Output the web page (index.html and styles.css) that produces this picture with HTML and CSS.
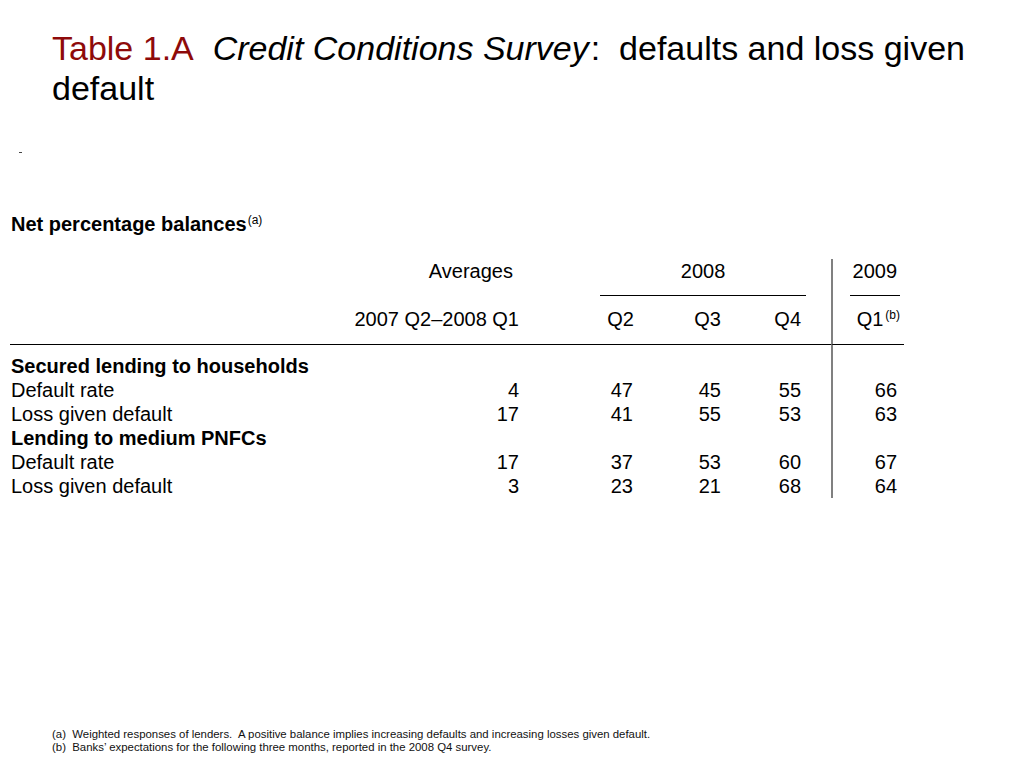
FILE: index.html
```html
<!DOCTYPE html>
<html>
<head>
<meta charset="utf-8">
<link rel="stylesheet" href="styles.css">
</head>
<body>
<div class="page">
  <h1 class="title"><span class="tnum">Table 1.A</span>&nbsp; <em>Credit Conditions Survey</em>:&nbsp; <span>defaults and loss given</span><br><span>default</span></h1>
  <div class="mark"></div>
  <div class="subhead">Net percentage balances<sup>(a)</sup></div>
  <table class="data">
    <colgroup>
      <col class="c-label"><col class="c-avg"><col class="c-q2"><col class="c-q3"><col class="c-q4"><col class="c-gap"><col class="c-q1"><col class="c-end">
    </colgroup>
    <tr class="h1">
      <td></td>
      <td class="num avg-h">Averages</td>
      <td colspan="3"><div class="u2008">2008</div></td>
      <td></td>
      <td class="num div"><div class="u2009">2009</div></td>
      <td></td>
    </tr>
    <tr class="h2">
      <td></td>
      <td class="num">2007 Q2–2008 Q1</td>
      <td class="num">Q2</td>
      <td class="num">Q3</td>
      <td class="num">Q4</td>
      <td></td>
      <td class="num div"><span class="q1b">Q1<sup>(b)</sup></span></td>
      <td></td>
    </tr>
    <tr class="first">
      <td class="grp" colspan="2">Secured lending to households</td>
      <td></td><td></td><td></td><td></td><td class="div"></td><td></td>
    </tr>
    <tr>
      <td class="lbl">Default rate</td><td class="num">4</td><td class="num q2">47</td><td class="num">45</td><td class="num">55</td><td></td><td class="num div">66</td><td></td>
    </tr>
    <tr>
      <td class="lbl">Loss given default</td><td class="num">17</td><td class="num q2">41</td><td class="num">55</td><td class="num">53</td><td></td><td class="num div">63</td><td></td>
    </tr>
    <tr>
      <td class="grp" colspan="2">Lending to medium PNFCs</td>
      <td></td><td></td><td></td><td></td><td class="div"></td><td></td>
    </tr>
    <tr>
      <td class="lbl">Default rate</td><td class="num">17</td><td class="num q2">37</td><td class="num">53</td><td class="num">60</td><td></td><td class="num div">67</td><td></td>
    </tr>
    <tr>
      <td class="lbl">Loss given default</td><td class="num">3</td><td class="num q2">23</td><td class="num">21</td><td class="num">68</td><td></td><td class="num div">64</td><td></td>
    </tr>
  </table>
  <div class="notes">
    <div>(a)&nbsp; Weighted responses of lenders.&nbsp; A positive balance implies increasing defaults and increasing losses given default.</div>
    <div>(b)&nbsp; Banks’ expectations for the following three months, reported in the 2008 Q4 survey.</div>
  </div>
</div>
</body>
</html>
```

FILE: styles.css
```css
html, body {
  margin: 0;
  padding: 0;
  background: #ffffff;
}
body {
  font-family: "Liberation Sans", Arial, sans-serif;
  color: #000;
}
.page {
  width: 1024px;
  height: 768px;
  display: flex;
  flex-direction: column;
  box-sizing: border-box;
}
.title {
  margin: 0;
  padding: 28px 40px 0 52px;
  font-size: 34px;
  line-height: 40px;
  font-weight: normal;
}
.title .tnum {
  color: #8e0a0a;
}
.title em {
  font-style: italic;
  padding-right: 2px;
}
.mark {
  margin: 44px 0 0 19px;
  width: 3px;
  height: 1px;
  background: #444;
}
.subhead {
  margin: 59px 0 0 11px;
  font-size: 20px;
  line-height: 24px;
  font-weight: bold;
}
.subhead sup {
  font-size: 12px;
  font-weight: normal;
  vertical-align: 7px;
  line-height: 0;
  margin-left: 1px;
}
.data {
  margin: 23px 0 0 10px;
  width: 894px;
  table-layout: fixed;
  border-collapse: separate;
  border-spacing: 0;
  font-size: 20px;
  line-height: 24px;
}
.data td {
  padding: 0;
  vertical-align: top;
  white-space: nowrap;
}
.c-label { width: 320px; }
.c-avg { width: 189px; }
.c-q2 { width: 115px; }
.c-q3 { width: 87px; }
.c-q4 { width: 80px; }
.c-gap { width: 30px; }
.c-q1 { width: 66px; }
.c-end { width: 7px; }

.num { text-align: right; }
.div { border-left: 2px solid #808080; }
.data tr.h1 td { height: 37px; }
.data tr.h1 td.div { box-shadow: inset 0 3px 0 #fff; }
.avg-h { padding-right: 6px !important; }
.u2008 {
  margin: 0 -5px 0 81px;
  text-align: center;
  padding-bottom: 12px;
  border-bottom: 1px solid #000;
}
.u2009 {
  margin: 0 -3px 0 17px;
  padding: 0 3px 12px 0;
  border-bottom: 1px solid #000;
  text-align: right;
}
.data tr.h2 td {
  padding-top: 11px;
  padding-bottom: 13px;
  border-bottom: 1px solid #000;
}
.q1b {
  margin-right: -3px;
}
.data sup {
  font-size: 12px;
  vertical-align: 7px;
  line-height: 0;
  margin-left: 2px;
}
.data tr.first td {
  padding-top: 9px;
}
.grp {
  font-weight: bold;
  padding-left: 1px !important;
}
.lbl {
  padding-left: 1px !important;
}
.q2 {
  padding-right: 1px !important;
}
.notes {
  margin-top: auto;
  padding: 0 0 14px 52px;
  font-size: 11.4px;
  line-height: 13px;
  color: #111;
}
```
